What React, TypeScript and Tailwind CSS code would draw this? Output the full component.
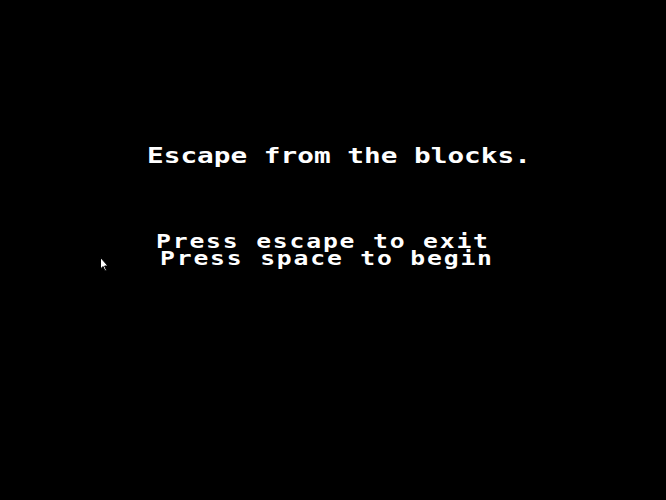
export default function App() {
  return (
    <div className="relative h-[500px] w-[666px] overflow-hidden bg-black text-white [font-family:'DejaVu_Sans_Mono','Liberation_Mono',monospace] font-bold">
      <div className="pt-[145px] pl-[147px]">
        <div className="origin-left scale-x-[1.26] text-[22px] leading-[22px] whitespace-pre">
          Escape from the blocks.
        </div>
      </div>
      <div className="mt-[66px] flex flex-col text-[19px] leading-[17px] tracking-[1.4px] whitespace-pre">
        <div className="pl-[156px]">
          <div className="origin-left scale-x-[1.3]">Press escape to exit</div>
        </div>
        <div className="pl-[160px]">
          <div className="origin-left scale-x-[1.3]">Press space to begin</div>
        </div>
      </div>
      {/* mouse pointer */}
      <svg className="absolute left-[100px] top-[257px]" width="10" height="15" viewBox="0 0 10 15">
        <path d="M0.5 0.5 L0.5 12 L3 9.5 L5 14 L6.5 13.3 L4.6 9 L8 9 Z" fill="#fff" stroke="#000" strokeWidth="1" />
      </svg>
    </div>
  )
}
